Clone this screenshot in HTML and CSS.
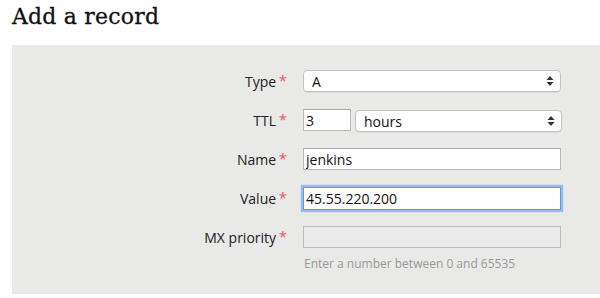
FILE: index.html
```html
<html>
<head>
    <title>Add a record</title>
    <link rel="stylesheet" href="styles.css">
</head>
<body>
    <h1 id="title">Add a record</h1>
    <div id="panel">
        <form id="record-form">
            <label class="field-label" for="type">Type <span class="req">*</span></label>
            <div class="select-wrap">
                <select id="type" name="type">
                    <option>A</option>
                </select>
                <svg class="arrows" width="8" height="12" viewBox="0 0 8 12"><path d="M4 1 L7.5 5 L0.5 5 Z M4 11 L7.5 7 L0.5 7 Z" fill="#333"/></svg>
            </div>

            <label class="field-label" for="ttl">TTL <span class="req">*</span></label>
            <div class="ttl-row">
                <input type="text" id="ttl" name="ttl" value="3">
                <div class="select-wrap">
                    <select id="ttl-unit" name="ttl-unit">
                        <option>hours</option>
                    </select>
                    <svg class="arrows" width="8" height="12" viewBox="0 0 8 12"><path d="M4 1 L7.5 5 L0.5 5 Z M4 11 L7.5 7 L0.5 7 Z" fill="#333"/></svg>
                </div>
            </div>

            <label class="field-label" for="name">Name <span class="req">*</span></label>
            <input type="text" id="name" name="name" value="jenkins">

            <label class="field-label" for="value">Value <span class="req">*</span></label>
            <input type="text" id="value" name="value" class="focused" value="45.55.220.200">

            <label class="field-label" for="mx">MX priority <span class="req">*</span></label>
            <div class="mx-field">
                <input type="text" id="mx" name="mx" disabled>
                <div class="help">Enter a number between 0 and 65535</div>
            </div>
        </form>
    </div>
</body>
</html>
```

FILE: styles.css
```css
body {
    margin: 0;
    background-color: #fff;
    font-family: "Open Sans", sans-serif;
    color: #222;
}
#title {
    margin: 0;
    padding: 4px 0 0 12px;
    height: 42px;
    box-sizing: border-box;
    font-family: "DejaVu Serif", serif;
    font-weight: normal;
    font-size: 22px;
    letter-spacing: 0.2px;
    color: #111;
    -webkit-text-stroke: 0.3px #111;
}
#panel {
    margin-left: 12px;
    margin-top: 3px;
    height: 249px;
    box-sizing: border-box;
    padding-top: 25px;
    background-color: #e9e9e8;
}
#record-form {
    display: grid;
    grid-template-columns: 275px 258px;
    column-gap: 16px;
    row-gap: 16px;
    align-items: start;
}
.field-label {
    font-size: 14px;
    line-height: 22px;
    text-align: right;
    color: #222;
}
.req {
    color: #e5605a;
    font-size: 15px;
    position: relative;
    top: -1px;
    margin-left: -1px;
}
input[type="text"], select {
    font-family: "Open Sans", sans-serif;
    font-size: 14px;
    color: #111;
    box-sizing: border-box;
    height: 22px;
    margin: 0;
}
input[type="text"] {
    width: 100%;
    border: 1px solid #b9b9b9;
    border-top-color: #a9a9a9;
    background: #fff;
    padding: 0 2px;
    outline: none;
}
input.focused {
    border: 1px solid #5d98e2;
    box-shadow: 0 0 1px 2px #93bff0;
    height: 23px;
}
input[disabled] {
    background: #ebebeb;
    border-color: #bcbcbc;
}
.select-wrap {
    position: relative;
    width: 100%;
}
select {
    -webkit-appearance: none;
    appearance: none;
    width: 100%;
    border: 1px solid #c2c2c2;
    border-radius: 4px;
    background: #fff;
    padding: 0 8px;
    box-shadow: 0 1px 0 rgba(0, 0, 0, 0.05);
}
.arrows {
    position: absolute;
    right: 7px;
    top: 5px;
    pointer-events: none;
}
.ttl-row {
    display: flex;
    gap: 4px;
}
#ttl {
    width: 48px;
    flex: none;
}
.ttl-row .select-wrap {
    flex: 1;
    margin-right: -1px;
    margin-top: 1px;
}
.help {
    font-size: 12px;
    color: #9a9a9a;
    margin-top: 7px;
    padding-left: 1px;
}
```
